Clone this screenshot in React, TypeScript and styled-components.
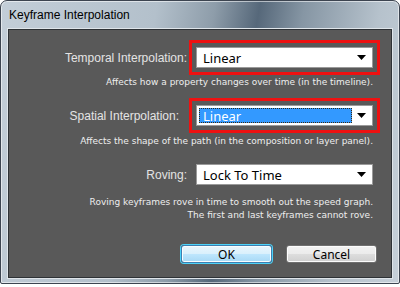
import React from 'react';
import styled, { createGlobalStyle } from 'styled-components';

const GlobalStyle = createGlobalStyle`
  html, body {
    margin: 0;
    padding: 0;
    background: #ffffff;
  }
`;

const Window = styled.div`
  box-sizing: border-box;
  width: 400px;
  height: 284px;
  border: 1px solid #3c4450;
  border-radius: 7px 7px 2px 2px;
  background: linear-gradient(100deg, #c3ced8 0%, #b3c0cb 35%, #8e9daa 48%, #56687a 58%, #8696a4 68%, #b6c2cc 85%, #c6d0d9 100%);
  box-shadow: inset 0 0 0 1px rgba(255, 255, 255, 0.55);
  display: flex;
  flex-direction: column;
  padding: 0 7px 5px 7px;
`;

const TitleBar = styled.div`
  height: 28px;
  display: flex;
  align-items: center;
  padding-left: 1px;
  font-family: "Liberation Sans", Arial, sans-serif;
  font-size: 12px;
  color: #000;
`;

const Panel = styled.div`
  flex: 1;
  box-sizing: border-box;
  background: #595959;
  border: 1px solid #2e3236;
  box-shadow: 0 0 0 1px #dfe5ea;
  display: flex;
  flex-direction: column;
  padding-top: 17px;
`;

const Row = styled.div<{ $top?: number }>`
  margin-top: ${({ $top }) => $top ?? 0}px;
  display: grid;
  grid-template-columns: 183px 177px;
  column-gap: 4px;
  align-items: center;
`;

const Label = styled.div<{ $inset?: number }>`
  text-align: right;
  padding-right: ${({ $inset }) => $inset ?? 5}px;
  font-family: "Liberation Sans", Arial, sans-serif;
  font-size: 12px;
  color: #e4e4e4;
  white-space: nowrap;
`;

const SelectBox = styled.div<{ $marked?: boolean }>`
  box-sizing: border-box;
  height: 21px;
  background: #ffffff;
  border: 1px solid #9a9a9a;
  display: flex;
  align-items: center;
  padding: 2px;
  outline: ${({ $marked }) => ($marked ? '3px solid #ee1111' : 'none')};
  outline-offset: 4px;
`;

const Value = styled.div<{ $focused?: boolean }>`
  flex: 1;
  height: 100%;
  box-sizing: border-box;
  display: flex;
  align-items: center;
  padding-left: 3px;
  font-family: "Noto Sans", "Open Sans", sans-serif;
  font-size: 13px;
  color: ${({ $focused }) => ($focused ? '#ffffff' : '#000000')};
  background: ${({ $focused }) => ($focused ? '#3399ff' : 'transparent')};
  border: 1px dotted ${({ $focused }) => ($focused ? '#3a2a10' : 'transparent')};
`;

const Arrow = styled.div`
  width: 18px;
  display: flex;
  justify-content: center;
  align-items: center;
`;

const Hint = styled.div<{ $top: number }>`
  margin-top: ${({ $top }) => $top}px;
  width: 364px;
  text-align: right;
  font-family: "DejaVu Sans", sans-serif;
  font-size: 9px;
  line-height: 13px;
  color: #eeeeee;
`;

const ButtonRow = styled.div`
  margin-top: auto;
  margin-bottom: 14px;
  display: flex;
  gap: 14px;
  padding-left: 172px;
`;

const Button = styled.div<{ $primary?: boolean }>`
  box-sizing: border-box;
  width: 91px;
  height: 18px;
  border-radius: 3px;
  display: flex;
  align-items: center;
  justify-content: center;
  font-family: "Noto Sans", "Open Sans", sans-serif;
  font-size: 12px;
  color: #000;
  border: 1px solid ${({ $primary }) => ($primary ? '#3c7fb1' : '#707070')};
  background: ${({ $primary }) =>
    $primary
      ? 'linear-gradient(#eaf6fd 0%, #d9f0fc 50%, #bee6fd 51%, #a7d9f5 100%)'
      : 'linear-gradient(#f2f2f2 0%, #ebebeb 50%, #dddddd 51%, #cfcfcf 100%)'};
  box-shadow: ${({ $primary }) =>
    $primary ? '0 0 0 1px #4cd2f8, inset 0 0 0 1px #fbfdfe' : 'inset 0 0 0 1px #fcfcfc'};
`;

const DropArrow = () => (
  <svg width="9" height="5" viewBox="0 0 9 5">
    <path d="M0 0 H9 L4.5 5 Z" fill="#000" />
  </svg>
);

const App: React.FC = () => {
  return (
    <>
      <GlobalStyle />
      <Window>
        <TitleBar>Keyframe Interpolation</TitleBar>
        <Panel>
          <Row>
            <Label>Temporal Interpolation:</Label>
            <SelectBox $marked>
              <Value>Linear</Value>
              <Arrow><DropArrow /></Arrow>
            </SelectBox>
          </Row>
          <Hint $top={8}>Affects how a property changes over time (in the timeline).</Hint>
          <Row $top={16}>
            <Label $inset={13}>Spatial Interpolation:</Label>
            <SelectBox $marked>
              <Value $focused>Linear</Value>
              <Arrow><DropArrow /></Arrow>
            </SelectBox>
          </Row>
          <Hint $top={9}>Affects the shape of the path (in the composition or layer panel).</Hint>
          <Row $top={16}>
            <Label>Roving:</Label>
            <SelectBox>
              <Value>Lock To Time</Value>
              <Arrow><DropArrow /></Arrow>
            </SelectBox>
          </Row>
          <Hint $top={11}>
            Roving keyframes rove in time to smooth out the speed graph.
            <br />
            The first and last keyframes cannot rove.
          </Hint>
          <ButtonRow>
            <Button $primary>OK</Button>
            <Button>Cancel</Button>
          </ButtonRow>
        </Panel>
      </Window>
    </>
  );
};

export default App;
